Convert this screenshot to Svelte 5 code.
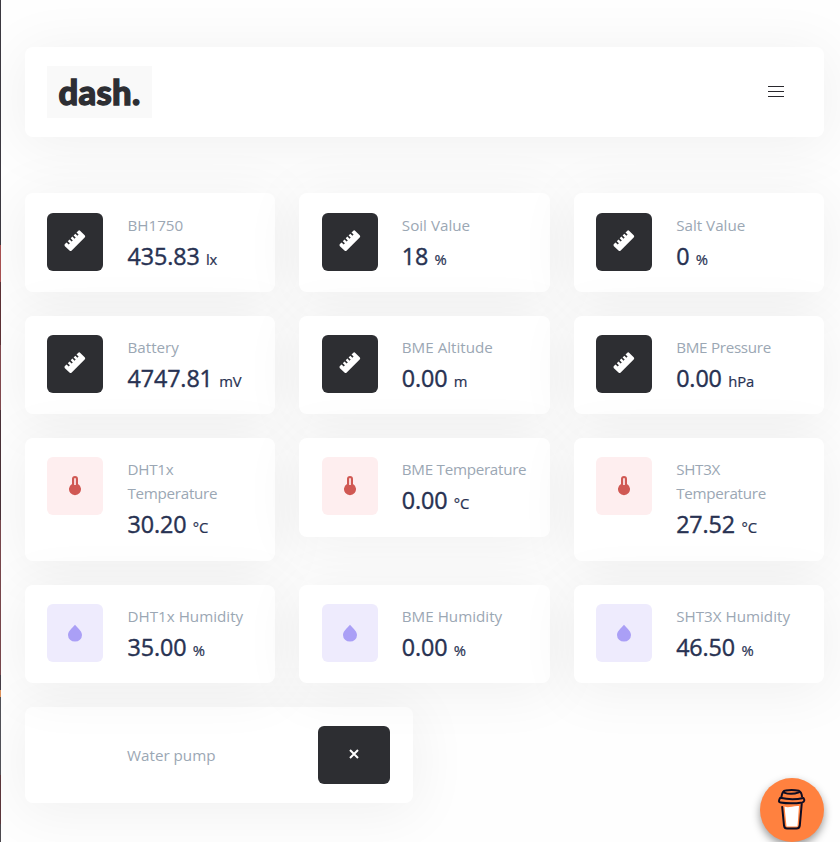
<script>
  const cards = [
    { kind: 'ruler', name: 'BH1750', value: '435.83', unit: 'lx' },
    { kind: 'ruler', name: 'Soil Value', value: '18', unit: '%' },
    { kind: 'ruler', name: 'Salt Value', value: '0', unit: '%' },
    { kind: 'ruler', name: 'Battery', value: '4747.81', unit: 'mV' },
    { kind: 'ruler', name: 'BME Altitude', value: '0.00', unit: 'm' },
    { kind: 'ruler', name: 'BME Pressure', value: '0.00', unit: 'hPa' },
    { kind: 'temp', name: 'DHT1x Temperature', value: '30.20', unit: '°C' },
    { kind: 'temp', name: 'BME Temperature', value: '0.00', unit: '°C' },
    { kind: 'temp', name: 'SHT3X Temperature', value: '27.52', unit: '°C' },
    { kind: 'drop', name: 'DHT1x Humidity', value: '35.00', unit: '%' },
    { kind: 'drop', name: 'BME Humidity', value: '0.00', unit: '%' },
    { kind: 'drop', name: 'SHT3X Humidity', value: '46.50', unit: '%' }
  ];
</script>

<div class="page">
  <div class="edge"></div>
  <header class="card">
    <div class="logo"><span>dash.</span></div>
    <button class="menu" aria-label="Menu"><i></i><i></i><i></i></button>
  </header>

  <main>
    {#each cards as c}
      <section class="card sensor">
        <div class="icon {c.kind}">
          {#if c.kind === 'ruler'}
            <svg width="24" height="24" viewBox="0 0 24 24">
              <path d="M1.9 15.1 3.6 13.4 5.7 15.5 6.9 14.3 4.8 12.2 6.5 10.5 8.6 12.6 9.8 11.4 7.7 9.3 9.4 7.6 11.5 9.7 12.7 8.5 10.6 6.4 12.3 4.7 14.4 6.8 15.6 5.6 13.5 3.5 15.1 1.9Q16.2 .8 17.3 1.9L21.7 6.3Q22.8 7.4 21.7 8.5L8.7 21.5Q7.6 22.6 6.5 21.5L1.9 17.2Q.9 16.1 1.9 15.1Z" fill="#fff" />
            </svg>
          {:else if c.kind === 'temp'}
            <svg width="14" height="22" viewBox="0 0 14 22">
              <path d="M4 9V4Q4 1 7 1T10 4V9A6 6 0 1 1 4 9Z" fill="#d05853" />
              <path d="M7 3.2V10" stroke="#fdecee" stroke-width="1.7" />
            </svg>
          {:else}
            <svg width="16" height="18" viewBox="0 0 16 18">
              <path d="M8 .8C9.2 2.8 15 6.8 15 11A7 6.6 0 0 1 1 11C1 6.8 6.8 2.8 8 .8Z" fill="#aa9ff6" />
            </svg>
          {/if}
        </div>
        <div class="info">
          <div class="name" class:tight={c.kind === 'temp' || c.name === 'BME Pressure'}>{c.name}</div>
          <div class="reading">{c.value} <small>{c.unit}</small></div>
        </div>
      </section>
    {/each}
  </main>

  <section class="card pump">
    <span class="name">Water pump</span>
    <button aria-label="Turn off">
      <svg width="12" height="12" viewBox="0 0 12 12"><path d="M2 2 10 10M10 2 2 10" stroke="#fff" stroke-width="2" /></svg>
    </button>
  </section>

  <div class="coffee">
    <svg width="30" height="44" viewBox="0 0 30 44" fill="none" stroke="#0d0c22" stroke-width="2" stroke-linejoin="round" stroke-linecap="round">
      <path d="M7.5 18.5C12 20.5 15 17.5 22 18L20.5 38.5H9.5Z" fill="#fff" stroke="none" />
      <path d="M5.2 19 7 37.5Q7.5 40.5 10 40.5H19.5Q22.3 40.5 22.8 37.5L24.7 16" />
      <path d="M3.2 9.8Q.5 14.2 3.5 14.5 14 16.2 25.5 14.4 28.5 13 26.5 10 15 12.5 3.2 9.8Z" fill="#ff813f" />
      <path d="M4.5 8.5Q5.3 3 8.5 2.6 15 1.4 22 2.8 24.5 4 25 8.5" />
      <path d="M7 4.6Q14 7.2 22 4.4" />
    </svg>
  </div>
</div>

<style>
  :global(body) { background: #fefefe; overflow: hidden; }
  .page {
    box-sizing: border-box;
    position: relative;
    height: 842px;
    padding: 47px 16px 0 25px;
    overflow: hidden;
    font-family: "Open Sans", "Noto Sans", sans-serif;
  }
  .edge {
    position: absolute;
    z-index: 1;
    left: 0;
    top: 0;
    bottom: 0;
    width: 1px;
    background: linear-gradient(#3b3840 0 245px, #a64f50 245px 282px, #5b3034 282px 345px, #80484d 345px 410px, #493137 410px 520px, #77464b 520px 675px, #443d46 675px 690px, #dc8f58 690px 697px, #505057 697px 775px, #5b353a 775px 824px, #4b484e 824px);
  }
  .card {
    box-sizing: border-box;
    border-radius: 8px;
    background: #fff;
    box-shadow: 0 6px 56px 5px rgba(0, 0, 0, .054);
  }
  header {
    height: 90px;
    display: flex;
    align-items: center;
    justify-content: space-between;
    padding: 0 40px 0 22px;
  }
  .logo {
    width: 105px;
    height: 52px;
    background: #f9f9f9;
    color: #2d2e33;
    display: flex;
    align-items: center;
    justify-content: center;
    font: 900 34.5px/52px Lato, sans-serif;
    letter-spacing: .3px;
    -webkit-text-stroke: 1.3px #2d2e33;
  }
  button { border: 0; padding: 0; }
  .menu {
    width: 16px;
    display: flex;
    flex-direction: column;
    gap: 4px;
    margin-bottom: 1px;
    background: none;
  }
  .menu i { height: 1px; background: #29282d; }
  main {
    margin-top: 56.4px;
    display: grid;
    grid-template-columns: repeat(3, 1fr);
    gap: 24px;
    align-items: start;
  }
  .sensor {
    display: flex;
    align-items: flex-start;
    min-height: 98.4px;
    padding: 19.2px 18px 17.2px 22.3px;
  }
  .icon {
    flex: none;
    width: 56px;
    height: 58px;
    border-radius: 6px;
    display: flex;
    align-items: center;
    justify-content: center;
  }
  .icon svg { margin-bottom: 1px; }
  .icon.ruler { background: #2d2e32; }
  .icon.temp { background: #feeeef; }
  .icon.drop svg { margin-bottom: 0; }
  .icon.drop { background: #eeebfd; }
  .info { margin-left: 24.2px; }
  .name { color: #9ba7b4; font-size: 15.2px; line-height: 24px; }
  .name.tight { letter-spacing: -.28px; }
  .reading {
    color: #283252;
    height: 38px;
    font-size: 23.3px;
    line-height: 38px;
    letter-spacing: -.1px;
    -webkit-text-stroke: .4px #283252;
    white-space: nowrap;
  }
  small { margin-left: .4px; font-size: 14.8px; line-height: 1; -webkit-text-stroke-width: .2px; }
  .pump {
    width: 388px;
    height: 96px;
    margin-top: 24px;
    padding: 0 23px 0 102px;
    display: flex;
    align-items: center;
    justify-content: space-between;
  }
  .pump button {
    width: 72px;
    height: 58px;
    border-radius: 6px;
    background: #2d2e32;
    display: flex;
    align-items: center;
    justify-content: center;
  }
  .pump button svg { margin-bottom: 2px; }
  .coffee {
    position: absolute;
    left: 760px;
    top: 778px;
    width: 64px;
    height: 64px;
    border-radius: 50%;
    background: #ff813f;
    box-shadow: 0 4px 8px rgba(0, 0, 0, .4);
    display: flex;
    align-items: center;
    justify-content: center;
  }
</style>
